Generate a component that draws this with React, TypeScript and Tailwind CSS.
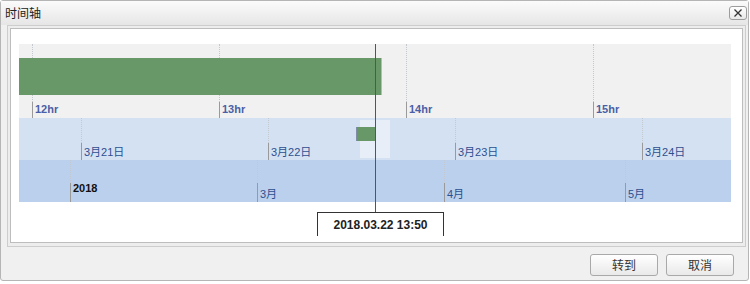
import React from "react";

const hourTicks = [
  { x: 13, label: "12hr" },
  { x: 200, label: "13hr" },
  { x: 387, label: "14hr" },
  { x: 574, label: "15hr" },
];

const dayTicks = [
  { x: 62, label: "3月21日" },
  { x: 249, label: "3月22日" },
  { x: 436, label: "3月23日" },
  { x: 623, label: "3月24日" },
];

const monthTicks = [
  { x: 51, label: "2018", year: true },
  { x: 238, label: "3月" },
  { x: 425, label: "4月" },
  { x: 606, label: "5月" },
];

const font = "font-['Liberation_Sans','Noto_Sans_CJK_SC',sans-serif]";

// tick marks sit at their place on the time scale, so they are positioned
function Tick({ x, top, solid }: { x: number; top: number; solid: number }) {
  return (
    <>
      <div
        className="absolute top-0 border-l border-dotted border-[#c4c9d0]"
        style={{ left: x, height: top }}
      />
      <div
        className="absolute w-px bg-[#9a9a9a]"
        style={{ left: x, top, height: solid }}
      />
    </>
  );
}

function Timeline() {
  return (
    <div className={`relative w-[712px] ${font}`}>
      {/* hour band */}
      <div className="relative h-[74px] bg-[#f1f1f1]">
        {hourTicks.map((t) => (
          <div key={t.label}>
            <Tick x={t.x} top={58} solid={16} />
            <span
              className="absolute top-[58px] text-[11px] font-bold leading-[14px] text-[#4b5fa6]"
              style={{ left: t.x + 3 }}
            >
              {t.label}
            </span>
          </div>
        ))}
        <div className="absolute left-0 top-[14px] h-[37px] w-[363px] bg-[#689868] border-r border-[#a9c4a9]" />
      </div>

      {/* day band */}
      <div className="relative h-[42px] bg-[#d4e1f2]">
        <div className="absolute left-[341px] top-[2px] h-[38px] w-[30px] bg-[#e7eef8]" />
        {dayTicks.map((t) => (
          <div key={t.label}>
            <Tick x={t.x} top={25} solid={17} />
            <span
              className="absolute top-[27px] text-[11px] leading-[14px] text-[#2e4f8f]"
              style={{ left: t.x + 3 }}
            >
              {t.label}
            </span>
          </div>
        ))}
        <div className="absolute left-[337px] top-[9px] h-[14px] w-[19px] bg-[#689868] border-l border-[#7f8ea6]" />
      </div>

      {/* month band */}
      <div className="relative h-[42px] bg-[#bad0ec]">
        {monthTicks.map((t) => (
          <div key={t.label}>
            <Tick x={t.x} top={23} solid={19} />
            <span
              className={
                t.year
                  ? "absolute top-[21px] text-[11px] font-bold leading-[14px] text-[#111]"
                  : "absolute top-[27px] text-[11px] leading-[14px] text-[#2e4f8f]"
              }
              style={{ left: t.x + 3 }}
            >
              {t.label}
            </span>
          </div>
        ))}
      </div>

      {/* current time marker */}
      <div className="absolute left-[356px] top-0 h-[168px] w-px bg-[#555]" />

      <div className="ml-[298px] mt-[10px] flex h-[24px] w-[127px] items-center justify-center border-x border-t border-[#333] bg-white">
        <span className="text-[12px] font-bold text-[#222]">2018.03.22 13:50</span>
      </div>
    </div>
  );
}

function Btn({ children }: { children: React.ReactNode }) {
  return (
    <button className="flex h-[22px] w-[68px] items-center justify-center rounded-[3px] border border-[#a9a9a9] bg-gradient-to-b from-[#ffffff] to-[#e9e9e9] text-[12px] text-[#333] font-['Noto_Sans_CJK_SC',sans-serif]">
      {children}
    </button>
  );
}

export default function App() {
  return (
    <div className="h-[284px] w-[750px] bg-white">
      <div className="flex h-[281px] w-[749px] flex-col rounded-[3px] border border-[#b5b5b5] bg-[#f0f0f0]">
        <div className="flex h-[24px] items-center justify-between bg-gradient-to-b from-[#fbfbfb] to-[#e6e6e6] pl-[4px] pr-px">
          <span className="text-[12px] leading-none text-[#222] font-['Noto_Sans_CJK_SC',sans-serif]">
            时间轴
          </span>
          <div className="flex h-[14px] w-[18px] items-center justify-center rounded-[3px] border border-[#9d9d9d] bg-gradient-to-b from-white to-[#e8e8e8]">
            <svg width="10" height="10" viewBox="0 0 10 10">
              <path d="M1.5 1.5 L8.5 8.5 M8.5 1.5 L1.5 8.5" stroke="#333" strokeWidth="1.3" />
            </svg>
          </div>
        </div>

        <div className="pl-[6px] pr-[2px]">
          <div className="border border-[#cdcdcd] bg-[#ededed] px-[2px] pt-[2px] pb-[3px]">
            <div className="border border-[#bdbdbd] bg-white pl-[8px] pt-[15px] pb-[6px]">
              <Timeline />
            </div>
          </div>
        </div>

        <div className="flex justify-end gap-[8px] pr-[14px] pt-[7px]">
          <Btn>转到</Btn>
          <Btn>取消</Btn>
        </div>
      </div>
    </div>
  );
}
